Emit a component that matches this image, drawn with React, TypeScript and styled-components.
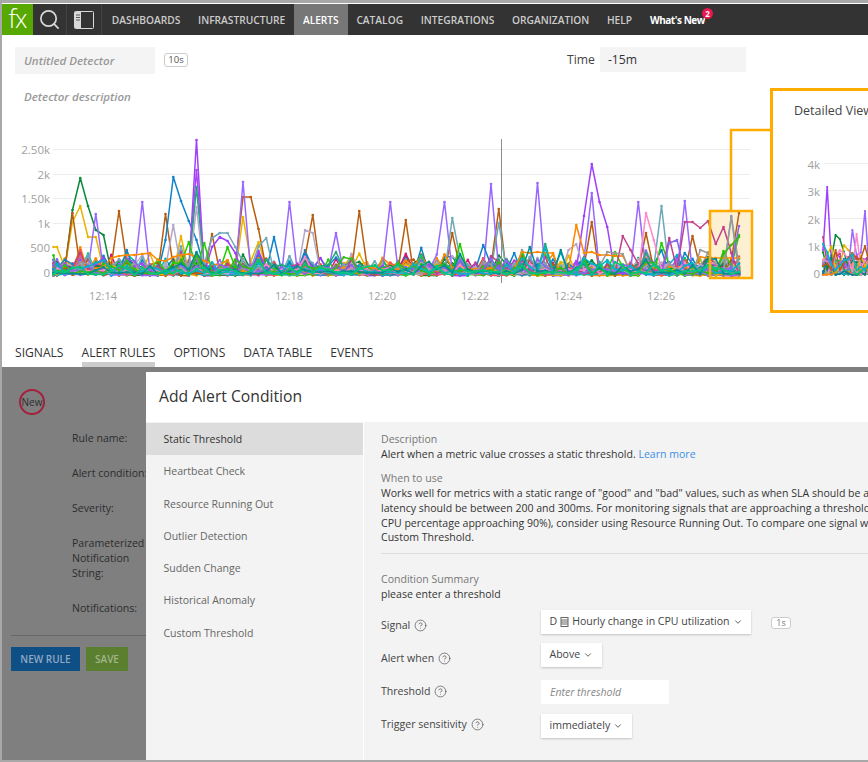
import React from "react";
import styled, { createGlobalStyle } from "styled-components";
import { Search, CircleHelp, ChevronDown } from "lucide-react";

const GlobalStyle = createGlobalStyle`
  html, body { margin: 0; padding: 0; background: #fff; }
  body { font-family: "Open Sans", "Liberation Sans", sans-serif; color: #444; }
`;

const orange = "#ffab00";

const Frame = styled.div`
  box-sizing: border-box;
  width: 868px;
  height: 762px;
  overflow: hidden;
  display: flex;
  flex-direction: column;
  border-left: 2px solid #a8a8a8;
  border-top: 3px solid #a8a8a8;
  border-bottom: 2px solid #a8a8a8;
`;

const Nav = styled.nav`
  flex: none;
  height: 31px;
  margin-top: 1px;
  display: flex;
  align-items: stretch;
  background: #333;
`;

const LogoCell = styled.div`
  width: 31px;
  background: #57a800;
  color: #fff;
  font-size: 25px;
  font-weight: 300;
  line-height: 29px;
  text-align: center;
  letter-spacing: -1px;
`;

const IconCell = styled.div<{ $w: number }>`
  box-sizing: border-box;
  width: ${(p) => p.$w}px;
  display: flex;
  align-items: center;
  justify-content: center;
  border-right: 1px solid #444;
  color: #d8d8d8;
`;

const NavLinks = styled.div`
  display: flex;
  padding-left: 1px;
`;

const NavLink = styled.a<{ $active?: boolean }>`
  padding: 0 8.85px;
  display: flex;
  align-items: center;
  font-size: 10.2px;
  font-weight: 600;
  color: ${(p) => (p.$active ? "#fff" : "#ccc")};
  background: ${(p) => (p.$active ? "#777" : "transparent")};
`;

const WhatsNew = styled.a`
  position: relative;
  margin-left: 9px;
  display: flex;
  align-items: center;
  font-size: 10px;
  font-weight: 700;
  letter-spacing: -0.45px;
  color: #fff;
`;

const NavBadge = styled.span`
  position: absolute;
  left: 52px;
  top: 4px;
  width: 11px;
  height: 11px;
  border-radius: 50%;
  background: #e8174f;
  color: #fff;
  font-size: 8px;
  line-height: 11px;
  letter-spacing: 0;
  text-align: center;
`;

const Toolbar = styled.div`
  flex: none;
  height: 27px;
  margin-top: 12px;
  padding-left: 13px;
  display: flex;
  align-items: flex-start;
`;

const NameField = styled.div`
  width: 140px;
  height: 27px;
  background: #f4f4f4;
  padding-left: 9px;
  box-sizing: border-box;
  font-size: 11.5px;
  font-style: italic;
  font-weight: 600;
  line-height: 27px;
  color: #999;
`;

const Chip = styled.span`
  box-sizing: border-box;
  display: inline-block;
  border: 1px solid #ccc;
  border-radius: 3px;
  background: #fff;
  color: #555;
  font-size: 9.5px;
  text-align: center;
`;

const ResolutionChip = styled(Chip)`
  width: 24px;
  height: 14px;
  line-height: 12px;
  margin: 6px 0 0 9px;
`;

const TimeLabel = styled.span`
  margin-left: 379px;
  font-size: 12.2px;
  line-height: 25px;
  color: #444;
`;

const TimeField = styled.div`
  box-sizing: border-box;
  width: 146px;
  height: 25px;
  margin-left: 5px;
  padding-left: 8px;
  background: #f4f4f4;
  font-size: 12.2px;
  line-height: 25px;
  color: #333;
`;

const Description = styled.div`
  flex: none;
  height: 18px;
  margin-top: 14px;
  padding-left: 22px;
  font-size: 11.5px;
  font-style: italic;
  font-weight: 600;
  line-height: 18px;
  color: #999;
`;

const ChartArea = styled.div`
  position: relative;
  flex: none;
  height: 237px;
`;

const ChartSvg = styled.svg`
  display: block;
  font-family: "Open Sans", "Liberation Sans", sans-serif;
`;

const Callout = styled.div`
  position: absolute;
  left: 768px;
  top: -18px;
  box-sizing: border-box;
  width: 120px;
  height: 225px;
  border: 3px solid ${orange};
  background: #fff;
`;

const CalloutTitle = styled.div`
  position: absolute;
  left: 21px;
  top: 11px;
  font-size: 12.5px;
  color: #444;
  white-space: nowrap;
`;

const Tabs = styled.div`
  flex: none;
  height: 24px;
  padding-left: 13px;
  display: flex;
  gap: 18px;
`;

const Tab = styled.a<{ $active?: boolean }>`
  box-sizing: border-box;
  height: 24px;
  font-size: 12.1px;
  line-height: 19px;
  color: #333;
  border-bottom: 5px solid ${(p) => (p.$active ? "#ccc" : "transparent")};
`;

const Lower = styled.div`
  flex: 1;
  min-height: 0;
  display: flex;
  background: #7f7f7f;
`;

const RulePane = styled.div`
  flex: none;
  width: 144px;
  overflow: hidden;
  color: #2d2d2d;
`;

const NewBadge = styled.div`
  box-sizing: border-box;
  width: 26px;
  height: 26px;
  margin: 22px 0 15.5px 17px;
  border: 2px solid #a3213f;
  border-radius: 50%;
  font-size: 10px;
  line-height: 22px;
  text-align: center;
`;

const RuleLabels = styled.div`
  margin-left: 70px;
  display: flex;
  flex-direction: column;
  gap: 20px;
`;

const RuleLabel = styled.div`
  font-size: 10.6px;
  line-height: 15px;
  white-space: nowrap;
`;

const RuleDivider = styled.hr`
  margin: 19px 0 11px 9px;
  border: 0;
  border-top: 1px solid #666;
`;

const RuleButtons = styled.div`
  margin-left: 9px;
  display: flex;
  gap: 6px;
`;

const RuleButton = styled.div<{ $bg: string; $w: number; $color: string }>`
  width: ${(p) => p.$w}px;
  height: 24px;
  background: ${(p) => p.$bg};
  color: ${(p) => p.$color};
  font-size: 10px;
  font-weight: 600;
  line-height: 24px;
  text-align: center;
`;

const Modal = styled.div`
  flex: 1;
  min-width: 0;
  margin-top: 5px;
  display: flex;
  flex-direction: column;
  background: #fff;
`;

const ModalHeader = styled.div`
  flex: none;
  height: 50px;
  padding-left: 13px;
  font-size: 15.7px;
  line-height: 48px;
  color: #333;
`;

const ModalBody = styled.div`
  flex: 1;
  min-height: 0;
  display: flex;
  gap: 1px;
`;

const Sidebar = styled.div`
  flex: none;
  width: 217px;
  padding-top: 1px;
  background: #f3f3f3;
`;

const SideItem = styled.div<{ $active?: boolean }>`
  height: 32.3px;
  padding-left: 17.5px;
  font-size: 10.5px;
  line-height: 32.3px;
  color: ${(p) => (p.$active ? "#333" : "#666")};
  background: ${(p) => (p.$active ? "#dcdcdc" : "transparent")};
`;

const Content = styled.div`
  flex: 1;
  min-width: 0;
  overflow: hidden;
  padding: 10px 0 0 17px;
  background: #f3f3f3;
  font-size: 10.55px;
  line-height: 14.7px;
  color: #333;
  white-space: nowrap;
`;

const Muted = styled.div`
  color: #777;
`;

const Gap = styled.div`
  margin-top: 10px;
`;

const Link = styled.a`
  color: #3d8fe8;
`;

const Divider = styled.hr`
  margin: 8px 0 18px;
  border: 0;
  border-top: 1px solid #ddd;
`;

const ConditionForm = styled.div`
  margin-top: 8.5px;
  display: flex;
  flex-direction: column;
`;

const FormRow = styled.div<{ $h: number }>`
  height: ${(p) => p.$h}px;
  display: flex;
  align-items: flex-start;
`;

const FormLabel = styled.div<{ $drop: number }>`
  flex: none;
  width: 160px;
  display: flex;
  align-items: center;
  gap: 4px;
  margin-top: ${(p) => p.$drop}px;
  color: #444;
`;

const Select = styled.div`
  box-sizing: border-box;
  height: 24px;
  padding: 0 8.5px;
  display: flex;
  align-items: center;
  gap: 3px;
  background: #fff;
  box-shadow: 0 1px 2px rgba(0, 0, 0, 0.2);
  color: #444;
`;

const ThresholdInput = styled.div`
  box-sizing: border-box;
  width: 128px;
  height: 24px;
  padding-left: 9px;
  background: #fff;
  font-size: 10.5px;
  font-style: italic;
  line-height: 24px;
  color: #888;
`;

const SignalChip = styled(Chip)`
  width: 20px;
  height: 12px;
  margin-left: 20px;
  margin-top: 7px;
  font-size: 9px;
  line-height: 10px;
  color: #777;
`;

const HelpIcon = () => <CircleHelp size={13} strokeWidth={1.2} color="#444" />;

// deterministic noise so the charts come out the same every run
function makeRng(seed: number) {
  let s = seed;
  return () => {
    s = (s + 0x6d2b79f5) | 0;
    let t = Math.imul(s ^ (s >>> 15), 1 | s);
    t = (t + Math.imul(t ^ (t >>> 7), 61 | t)) ^ t;
    return ((t ^ (t >>> 14)) >>> 0) / 4294967296;
  };
}

type Pt = [number, number];
type Spec = { color: string; peaks: Pt[] };

const STEP = 7.75;
const gridXs: number[] = [53.5];
for (let x = 57; x <= 740; x += STEP) gridXs.push(x);

const palette = [
  "#00c878", "#ff8800", "#a040ff", "#0f82c8", "#e0107a", "#22cc00", "#b85c0e", "#9966ff",
  "#6fa8b8", "#e8b400", "#0a8a3a", "#ff5050", "#00b5c8", "#b5a8c8", "#c0408a", "#999999",
  "#4466dd", "#8fbf20", "#ff88cc", "#117799",
];

const handSeries: Spec[] = [
  { color: "#0a8a3a", peaks: [[72, 210], [80, 178], [88, 206], [95, 230], [103, 235], [119, 262]] },
  { color: "#e8b400", peaks: [[57, 247], [72, 222], [80, 206], [88, 237], [96, 237], [181, 236], [243, 217], [258, 242]] },
  { color: "#b85c0e", peaks: [[72, 213], [119, 211], [165, 214], [212, 234], [243, 197], [251, 197], [258, 229], [313, 215], [359, 211], [406, 220], [452, 233], [499, 209], [592, 222], [646, 233], [692, 236], [739, 213]] },
  { color: "#9966ff", peaks: [[95, 214], [142, 202], [243, 182], [289, 202], [336, 233], [390, 202], [444, 202], [491, 184], [538, 183], [592, 193], [638, 202], [685, 201]] },
  { color: "#0f82c8", peaks: [[165, 240], [173, 177], [181, 201], [188, 221], [196, 240], [274, 237], [460, 260], [483, 245], [661, 250], [685, 253]] },
  { color: "#a040ff", peaks: [[196, 140], [212, 247], [220, 237], [227, 241], [235, 253], [584, 216], [592, 164], [600, 202], [607, 227]] },
  { color: "#a848f0", peaks: [[196, 170]] },
  { color: "#1fa878", peaks: [[196, 187], [336, 252], [542, 244]] },
  { color: "#b5a8c8", peaks: [[173, 225], [196, 207], [305, 230], [313, 233], [568, 250], [575, 244]] },
  { color: "#6fa8b8", peaks: [[212, 238], [220, 233], [227, 233], [235, 247], [266, 238], [452, 218], [499, 223], [662, 206], [731, 217]] },
  { color: "#22cc00", peaks: [[188, 242], [204, 243], [227, 247], [460, 244], [522, 252], [615, 252], [661, 243], [724, 251], [739, 235]] },
  { color: "#ff8800", peaks: [[103, 267], [111, 258], [119, 256], [127, 255], [134, 255], [142, 254], [150, 253], [157, 260], [165, 261], [173, 257], [181, 255], [188, 254], [196, 257], [204, 261], [212, 264], [220, 265], [227, 260], [522, 252], [530, 253], [538, 252], [545, 253], [553, 253], [576, 225], [584, 253], [592, 252], [600, 255], [607, 255], [615, 256], [623, 256], [700, 257], [708, 258], [716, 258], [724, 258], [732, 258], [739, 258]] },
  { color: "#c0408a", peaks: [[622, 236], [630, 250], [669, 238], [684, 222], [692, 222], [700, 228], [708, 221], [716, 244], [723, 227], [731, 253]] },
  { color: "#ff88cc", peaks: [[646, 213], [653, 240]] },
  { color: "#999999", peaks: [[607, 252], [615, 253], [622, 254], [700, 250], [708, 253], [732, 216]] },
  { color: "#8866ee", peaks: [[669, 243], [677, 240], [739, 226]] },
  { color: "#33bb11", peaks: [[723, 254], [731, 245], [739, 237]] },
  { color: "#00b5c8", peaks: [[546, 248], [561, 252], [584, 258]] },
  { color: "#008f8f", peaks: [[460, 254], [530, 247], [561, 250]] },
];

// a spike that most background series share, gives the dense bumps along the base
const sharedBumps = [80, 127, 181, 196, 258, 305, 352, 421, 460, 522, 584, 646, 708];

function buildLine(xs: number[], peaks: Pt[], rand: () => number, amp: number, base: number): Pt[] {
  return xs.map((x) => {
    const hit = peaks.find((p) => Math.abs(p[0] - x) < STEP / 2);
    if (hit) return [x, hit[1]];
    const bump = sharedBumps.some((b) => Math.abs(b - x) < STEP / 2) && rand() > 0.5 ? rand() * 16 : 0;
    const spike = rand() > 0.9 ? rand() * amp : 0;
    return [x, base - rand() * rand() * 12 - bump - spike];
  });
}

const toPoints = (pts: Pt[]) => pts.map((p) => `${p[0].toFixed(1)},${p[1].toFixed(1)}`).join(" ");

function Series({ pts, color, r = 1.3 }: { pts: Pt[]; color: string; r?: number }) {
  return (
    <g>
      <polyline points={toPoints(pts)} fill="none" stroke={color} strokeWidth={1.5} strokeLinejoin="round" />
      {pts.map((p, i) => (
        <circle key={i} cx={p[0]} cy={p[1]} r={r} fill={color} />
      ))}
    </g>
  );
}

const rand = makeRng(42);
const backgroundLines = Array.from({ length: 34 }, (_, i) => ({
  color: palette[i % palette.length],
  pts: buildLine(gridXs, [], rand, 14, 276 - rand() * 3),
}));
const mainLines = handSeries.map((s) => ({
  color: s.color,
  pts: buildLine(gridXs, s.peaks, rand, 12, 274),
}));
const frontLine = {
  color: "#00c878",
  pts: buildLine(gridXs, [], rand, 6, 275),
};

// the zoomed view in the callout, same idea on a wider x step
const detailXs: number[] = [];
for (let x = 823; x <= 870; x += 4.2) detailXs.push(x);
const detailHand: Spec[] = [
  { color: "#a040ff", peaks: [[825, 250], [829, 187]] },
  { color: "#c0408a", peaks: [[825, 237], [829, 265]] },
  { color: "#0a8a3a", peaks: [[837, 235], [841, 239], [846, 252]] },
  { color: "#e8b400", peaks: [[833, 246], [846, 245], [850, 250]] },
  { color: "#9966ff", peaks: [[854, 230], [858, 255], [863, 211]] },
  { color: "#ff88cc", peaks: [[841, 250], [858, 234]] },
  { color: "#b85c0e", peaks: [[837, 250], [866, 246]] },
  { color: "#00b5c8", peaks: [[825, 244], [829, 252]] },
];
const detailRand = makeRng(7);
const detailLines = [
  ...Array.from({ length: 22 }, (_, i) => ({
    color: palette[i % palette.length],
    pts: detailXs.map((x): Pt => [x, 275 - detailRand() * detailRand() * 22]),
  })),
  ...detailHand.map((s) => ({
    color: s.color,
    pts: detailXs.map((x): Pt => {
      const hit = s.peaks.find((p) => Math.abs(p[0] - x) < 2.1);
      return hit ? [x, hit[1]] : [x, 272 - detailRand() * 20];
    }),
  })),
];

const yTicks = [
  { label: "2.50k", y: 150 },
  { label: "2k", y: 175 },
  { label: "1.50k", y: 199 },
  { label: "1k", y: 224 },
  { label: "500", y: 248 },
  { label: "0", y: 273 },
];
const xTicks = [
  { label: "12:14", x: 103 },
  { label: "12:16", x: 196 },
  { label: "12:18", x: 289 },
  { label: "12:20", x: 382 },
  { label: "12:22", x: 475 },
  { label: "12:24", x: 568 },
  { label: "12:26", x: 661 },
];

function MainChart() {
  return (
    <ChartSvg width={866} height={237} viewBox="2 106 866 237">
      {yTicks.map((t) => (
        <g key={t.label}>
          <line x1={53} x2={750} y1={t.y - 0.5} y2={t.y - 0.5} stroke="#ececec" />
          <text x={50} y={t.y + 4} textAnchor="end" fontSize={11.5} fill="#a0a0a0">
            {t.label}
          </text>
        </g>
      ))}
      {xTicks.map((t) => (
        <text key={t.label} x={t.x} y={300} textAnchor="middle" fontSize={11} fill="#a0a0a0">
          {t.label}
        </text>
      ))}
      <rect x={710} y={211} width={42} height={67} fill="#fdefd2" />
      {backgroundLines.map((l, i) => (
        <Series key={i} pts={l.pts} color={l.color} />
      ))}
      {mainLines.map((l, i) => (
        <Series key={i} pts={l.pts} color={l.color} />
      ))}
      <Series pts={frontLine.pts} color={frontLine.color} />
      <line x1={501.5} x2={501.5} y1={139} y2={283} stroke="#8c8c8c" />
      <rect x={710} y={211} width={42} height={67} fill="none" stroke={orange} strokeWidth={2.5} />
      <polyline points="731,211 731,130 771,130" fill="none" stroke={orange} strokeWidth={2.5} />
    </ChartSvg>
  );
}

function DetailChart() {
  const ticks = [
    { label: "4k", y: 165 },
    { label: "3k", y: 192 },
    { label: "2k", y: 220 },
    { label: "1k", y: 247 },
    { label: "0", y: 274 },
  ];
  return (
    <ChartSvg width={120} height={219} viewBox="773 91 120 219">
      {ticks.map((t) => (
        <g key={t.label}>
          <line x1={824} x2={893} y1={t.y - 1.5} y2={t.y - 1.5} stroke="#ececec" />
          <text x={820} y={t.y + 4} textAnchor="end" fontSize={11.5} fill="#a0a0a0">
            {t.label}
          </text>
        </g>
      ))}
      {detailLines.map((l, i) => (
        <Series key={i} pts={l.pts} color={l.color} r={1.1} />
      ))}
    </ChartSvg>
  );
}

function PanelIcon() {
  return (
    <svg width="20" height="18" viewBox="0 0 20 18" fill="none">
      <rect x="0.5" y="0.5" width="19" height="17" rx="1" fill="#333" stroke="#d8d8d8" />
      <rect x="1" y="1" width="6" height="16" fill="#d8d8d8" />
      <path d="M2 4h4M2 6.5h4M2 9h4" stroke="#555" />
    </svg>
  );
}

function MetricIcon() {
  return (
    <svg width="9" height="10" viewBox="0 0 9 10" fill="none" stroke="#666">
      <rect x="1" y="0.5" width="7" height="9" />
      <path d="M1 3h7M1 5h7M1 7h7" />
    </svg>
  );
}

const tabs = ["SIGNALS", "ALERT RULES", "OPTIONS", "DATA TABLE", "EVENTS"];
const sideItems = [
  "Static Threshold",
  "Heartbeat Check",
  "Resource Running Out",
  "Outlier Detection",
  "Sudden Change",
  "Historical Anomaly",
  "Custom Threshold",
];

export default function App() {
  return (
    <>
      <GlobalStyle />
      <Frame>
        <Nav>
          <LogoCell>fx</LogoCell>
          <IconCell $w={34}>
            <Search size={23} strokeWidth={1.8} />
          </IconCell>
          <IconCell $w={35}>
            <PanelIcon />
          </IconCell>
          <NavLinks>
            <NavLink>DASHBOARDS</NavLink>
            <NavLink>INFRASTRUCTURE</NavLink>
            <NavLink $active>ALERTS</NavLink>
            <NavLink>CATALOG</NavLink>
            <NavLink>INTEGRATIONS</NavLink>
            <NavLink>ORGANIZATION</NavLink>
            <NavLink>HELP</NavLink>
            <WhatsNew>
              What's New
              <NavBadge>2</NavBadge>
            </WhatsNew>
          </NavLinks>
        </Nav>

        <Toolbar>
          <NameField>Untitled Detector</NameField>
          <ResolutionChip>10s</ResolutionChip>
          <TimeLabel>Time</TimeLabel>
          <TimeField>-15m</TimeField>
        </Toolbar>
        <Description>Detector description</Description>

        <ChartArea>
          <MainChart />
          <Callout>
            <DetailChart />
            <CalloutTitle>Detailed View</CalloutTitle>
          </Callout>
        </ChartArea>

        <Tabs>
          {tabs.map((t) => (
            <Tab key={t} $active={t === "ALERT RULES"}>
              {t}
            </Tab>
          ))}
        </Tabs>

        <Lower>
          <RulePane>
            <NewBadge>New</NewBadge>
            <RuleLabels>
              <RuleLabel>Rule name:</RuleLabel>
              <RuleLabel>Alert condition:</RuleLabel>
              <RuleLabel>Severity:</RuleLabel>
              <RuleLabel>
                Parameterized
                <br />
                Notification
                <br />
                String:
              </RuleLabel>
              <RuleLabel>Notifications:</RuleLabel>
            </RuleLabels>
            <RuleDivider />
            <RuleButtons>
              <RuleButton $bg="#0e4f86" $w={69} $color="#8fa9c2">
                NEW RULE
              </RuleButton>
              <RuleButton $bg="#5a7f2e" $w={42} $color="#a3b58c">
                SAVE
              </RuleButton>
            </RuleButtons>
          </RulePane>

          <Modal>
            <ModalHeader>Add Alert Condition</ModalHeader>
            <ModalBody>
              <Sidebar>
                {sideItems.map((s, i) => (
                  <SideItem key={s} $active={i === 0}>
                    {s}
                  </SideItem>
                ))}
              </Sidebar>
              <Content>
                <Muted>Description</Muted>
                <div>
                  Alert when a metric value crosses a static threshold. <Link>Learn more</Link>
                </div>
                <Gap />
                <Muted>When to use</Muted>
                <div>Works well for metrics with a static range of "good" and "bad" values, such as when SLA should be at</div>
                <div>latency should be between 200 and 300ms. For monitoring signals that are approaching a threshold</div>
                <div>CPU percentage approaching 90%), consider using Resource Running Out. To compare one signal with</div>
                <div>Custom Threshold.</div>
                <Divider />
                <Muted>Condition Summary</Muted>
                <div>please enter a threshold</div>
                <ConditionForm>
                  <FormRow $h={33}>
                    <FormLabel $drop={8.6}>
                      Signal <HelpIcon />
                    </FormLabel>
                    <Select>
                      D <MetricIcon /> Hourly change in CPU utilization <ChevronDown size={10} />
                    </Select>
                    <SignalChip>1s</SignalChip>
                  </FormRow>
                  <FormRow $h={37}>
                    <FormLabel $drop={8.6}>
                      Alert when <HelpIcon />
                    </FormLabel>
                    <Select>
                      Above <ChevronDown size={10} />
                    </Select>
                  </FormRow>
                  <FormRow $h={34}>
                    <FormLabel $drop={4.6}>
                      Threshold <HelpIcon />
                    </FormLabel>
                    <ThresholdInput>Enter threshold</ThresholdInput>
                  </FormRow>
                  <FormRow $h={24}>
                    <FormLabel $drop={3.6}>
                      Trigger sensitivity <HelpIcon />
                    </FormLabel>
                    <Select>
                      immediately <ChevronDown size={10} />
                    </Select>
                  </FormRow>
                </ConditionForm>
              </Content>
            </ModalBody>
          </Modal>
        </Lower>
      </Frame>
    </>
  );
}
